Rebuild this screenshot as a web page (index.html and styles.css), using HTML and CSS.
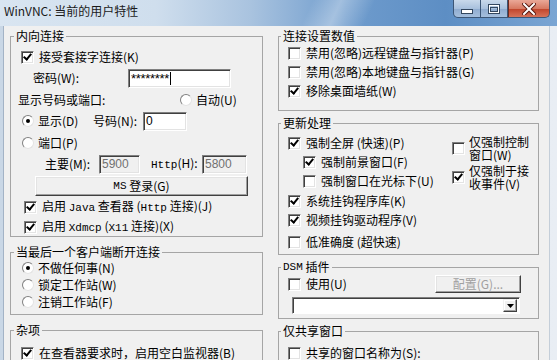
FILE: index.html
```html
<!DOCTYPE html>
<html lang="zh-CN">
<head>
  <meta charset="UTF-8" />
  <title>WinVNC: 当前的用户特性</title>
  <link rel="stylesheet" href="styles.css">
</head>
<body>

<div class="window">
  <div class="titlebar">
    <span class="title">WinVNC: 当前的用户特性</span>
    <div class="caption">
      <span class="cbtn min">
        <svg width="12" height="6" viewBox="0 0 12 6"><rect x="0.5" y="1.5" width="11" height="4" fill="#fff" stroke="#33475f"/></svg>
      </span>
      <span class="cbtn max">
        <svg width="12" height="10" viewBox="0 0 12 10"><rect x="0.5" y="0.5" width="11" height="9" fill="none" stroke="#33475f"/><rect x="1.5" y="1.5" width="9" height="7" fill="none" stroke="#fff" stroke-width="1"/><rect x="2.5" y="3.5" width="7" height="4" fill="none" stroke="#33475f"/></svg>
      </span>
      <span class="cbtn close">
        <svg width="14" height="12" viewBox="0 0 14 12"><path d="M2 1l10 10M12 1L2 11" stroke="#5a1a10" stroke-width="4" stroke-linecap="square"/><path d="M2 1l10 10M12 1L2 11" stroke="#fff" stroke-width="2" stroke-linecap="square"/></svg>
      </span>
    </div>
  </div>

  <div class="client">
    <!-- left column -->
    <div class="col left">
      <fieldset class="group g-in">
        <legend>内向连接</legend>
        <div class="body">
          <div class="row"><span class="chk on"></span><span class="txt">接受套接字连接(K)</span></div>
          <div class="row h20">
            <span class="lbl pwd-lbl">密码(W):</span>
            <span class="edit pwd">********<i class="caret"></i></span>
          </div>
          <div class="row h19">
            <span class="lbl port-lbl">显示号码或端口:</span>
            <span class="rad"></span><span class="txt">自动(U)</span>
          </div>
          <div class="row h20">
            <span class="rad on ind1"></span><span class="txt show-txt">显示(D)</span>
            <span class="lbl num-lbl">号码(N):</span>
            <span class="edit num">0</span>
          </div>
          <div class="row h19"><span class="rad ind1"></span><span class="txt">端口(P)</span></div>
          <div class="row h20">
            <span class="lbl main-lbl">主要(M):</span>
            <span class="edit off e-main">5900</span>
            <span class="lbl http-lbl"><span class="mono">Http</span>(H):</span>
            <span class="edit off e-http">5800</span>
          </div>
          <div class="row h20"><span class="btn ms-btn"><span class="mono">MS</span>&nbsp;登录(G)</span></div>
          <div class="row ind3"><span class="chk on"></span><span class="txt">启用 <span class="mono">Java</span> 查看器 (<span class="mono">Http</span> 连接)(J)</span></div>
          <div class="row ind3"><span class="chk on"></span><span class="txt">启用 <span class="mono">Xdmcp</span> (<span class="mono">X11</span> 连接)(X)</span></div>
        </div>
      </fieldset>

      <fieldset class="group g-last">
        <legend>当最后一个客户端断开连接</legend>
        <div class="body">
          <div class="row h17"><span class="rad on ind1"></span><span class="txt">不做任何事(N)</span></div>
          <div class="row h17"><span class="rad ind1"></span><span class="txt">锁定工作站(W)</span></div>
          <div class="row h17"><span class="rad ind1"></span><span class="txt">注销工作站(F)</span></div>
        </div>
      </fieldset>

      <fieldset class="group g-misc">
        <legend>杂项</legend>
        <div class="body">
          <div class="row"><span class="chk on"></span><span class="txt">在查看器要求时，启用空白监视器(B)</span></div>
        </div>
      </fieldset>
    </div>

    <!-- right column -->
    <div class="col right">
      <fieldset class="group g-conn">
        <legend>连接设置数值</legend>
        <div class="body">
          <div class="row"><span class="chk"></span><span class="txt">禁用(忽略)远程键盘与指针器(P)</span></div>
          <div class="row"><span class="chk"></span><span class="txt">禁用(忽略)本地键盘与指针器(G)</span></div>
          <div class="row"><span class="chk on"></span><span class="txt">移除桌面墙纸(W)</span></div>
        </div>
      </fieldset>

      <fieldset class="group g-upd">
        <legend>更新处理</legend>
        <div class="body">
          <div class="split">
            <div class="sub-left">
              <div class="row"><span class="chk on"></span><span class="txt">强制全屏 (快速)(P)</span></div>
              <div class="row ind15"><span class="chk on"></span><span class="txt">强制前景窗口(F)</span></div>
              <div class="row ind15"><span class="chk"></span><span class="txt">强制窗口在光标下(U)</span></div>
            </div>
            <div class="sub-right">
              <div class="two-line"><span class="chk"></span><span class="txt">仅强制控制<br>窗口(W)</span></div>
              <div class="two-line"><span class="chk on"></span><span class="txt">仅强制于接<br>收事件(V)</span></div>
            </div>
          </div>
          <div class="row hook"><span class="chk on"></span><span class="txt">系统挂钩程序库(K)</span></div>
          <div class="row video"><span class="chk on"></span><span class="txt">视频挂钩驱动程序(V)</span></div>
          <div class="row low"><span class="chk"></span><span class="txt">低准确度 (超快速)</span></div>
        </div>
      </fieldset>

      <fieldset class="group g-dsm">
        <legend><span class="mono">DSM</span> 插件</legend>
        <div class="body">
          <div class="row">
            <span class="chk"></span><span class="txt">使用(U)</span>
            <span class="btn off cfg-btn">配置(G)...</span>
          </div>
          <div class="combo"><span class="drop"><svg width="7" height="4" viewBox="0 0 7 4"><path d="M0 0h7L3.5 4z" fill="#000"/></svg></span></div>
        </div>
      </fieldset>

      <fieldset class="group g-share">
        <legend>仅共享窗口</legend>
        <div class="body">
          <div class="row"><span class="chk"></span><span class="txt">共享的窗口名称为(S):</span></div>
        </div>
      </fieldset>
    </div>
  </div>
</div>

</body>
</html>
```

FILE: styles.css
```css
* {
  box-sizing: border-box;
}
body {
  margin: 0;
  font-family: "Noto Sans CJK SC", "Liberation Sans", sans-serif;
  font-size: 12px;
  color: #000;
  background: #fff;
}
.mono {
  font-family: "Liberation Mono", "Noto Sans CJK SC", monospace;
  font-size: 11px;
}

/* window frame */
.window {
  width: 557px;
  height: 360px;
  overflow: hidden;
  display: flex;
  flex-direction: column;
  background: linear-gradient(90deg, #c9d7e6, #dfe7f0 50%, #e9eef4);
}
.titlebar {
  height: 26px;
  flex: none;
  display: flex;
  justify-content: space-between;
  align-items: flex-start;
  background:
    linear-gradient(115deg, transparent 55%, rgba(255,255,255,.35) 60%, transparent 66%),
    linear-gradient(90deg, #d9e5f1 0%, #cfdeed 28%, #a9c3df 45%, #6f9ccd 62%, #5d8ec4 80%, #7aa5d3 100%);
}
.title {
  padding: 3px 0 0 4px;
  line-height: 16px;
  color: #1a1a1a;
}
.caption {
  display: flex;
  margin-right: 7px;
}
.cbtn {
  height: 18px;
  display: flex;
  align-items: center;
  justify-content: center;
  border: 1px solid #3c5676;
  border-top: none;
}
.cbtn.min {
  width: 28px;
  border-radius: 0 0 0 5px;
  background: linear-gradient(#c9d9eb, #a9c1dd 50%, #8fabcf 51%, #a5bfdd);
  padding-top: 4px;
}
.cbtn.max {
  width: 27px;
  border-left: none;
  background: linear-gradient(#c9d9eb, #a9c1dd 50%, #8fabcf 51%, #a5bfdd);
}
.cbtn.close {
  width: 42px;
  border-left-color: #6b2a20;
  border-radius: 0 0 5px 0;
  background: linear-gradient(#eaa898, #d77a63 50%, #c0432a 51%, #d6735a);
}

/* client area */
.client {
  flex: 1;
  display: grid;
  grid-template-columns: 253px 261px;
  column-gap: 15px;
  align-items: start;
  margin: 0 7px 0 3px;
  padding: 3px 10px 0 6px;
  background: #f0f0f0;
  border-left: 1px solid #a3b3c6;
  border-right: 1px solid #c4ced9;
}
.col {
  display: flex;
  flex-direction: column;
}
.col.left {
  gap: 8px;
}
.col.right {
  gap: 5px;
}

/* group boxes */
.group {
  margin: 0;
  min-width: 0;
  padding: 0 10px;
  border: 1px solid #a5a5a5;
}
.col.right .group {
  padding: 0 9px;
}
.group legend {
  height: 14px;
  padding: 0 2px;
  margin-left: -7px;
  line-height: 14px;
  white-space: nowrap;
}
.group legend .mono {
  vertical-align: top;
}
.body {
  display: flex;
  flex-direction: column;
}
.g-in .body {
  padding-top: 5px;
  gap: 2px;
}
.g-last .body {
  padding-bottom: 4px;
}
.g-misc .body {
  padding-top: 7px;
}
.g-conn .body {
  padding: 1px 0 10px;
  gap: 1px;
}
.g-upd .body {
  padding: 4px 0 3px;
}
.g-dsm .body {
  padding: 1px 8px 4px 0;
  gap: 4px;
}
.g-share .body {
  padding-top: 6px;
}

/* rows */
.row {
  display: flex;
  align-items: center;
  height: 18px;
  white-space: nowrap;
}
.row.h17 { height: 17px; }
.row.h19 { height: 19px; }
.row.h20 { height: 20px; }
.row.ind3 { padding-left: 3px; }
.row.ind15 { padding-left: 15px; }
.txt {
  margin-left: 5px;
  line-height: 14px;
}
.lbl {
  flex: none;
  line-height: 14px;
}
.pwd-lbl { margin-left: 12px; width: 95px; }
.port-lbl { margin-left: -3px; width: 162px; }
.show-txt { width: 55px; }
.num-lbl { width: 50px; }
.main-lbl { margin-left: 24px; width: 54px; }
.http-lbl { margin-left: 11px; width: 51px; }

/* check boxes and radio buttons */
.chk {
  flex: none;
  width: 13px;
  height: 13px;
  display: grid;
  place-items: center;
  background: #fff;
  border: 1px solid;
  border-color: #808080 #fff #fff #808080;
  box-shadow: inset 1px 1px 0 #404040, inset -1px -1px 0 #e3e3e3;
}
.chk.on::after {
  content: "";
  width: 3px;
  height: 6px;
  margin-top: -2px;
  border: solid #000;
  border-width: 0 2px 2px 0;
  transform: rotate(40deg);
}
.rad {
  flex: none;
  width: 12px;
  height: 12px;
  display: grid;
  place-items: center;
  border-radius: 50%;
  background: #fff;
  border: 1px solid;
  border-color: #808080 #e3e3e3 #e3e3e3 #808080;
}
.rad.ind1 {
  margin-left: 1px;
}
.rad.on::after {
  content: "";
  width: 4px;
  height: 4px;
  border-radius: 50%;
  background: #000;
}
.rad + .txt {
  margin-left: 4px;
}

/* edits, buttons, combo */
.edit {
  flex: none;
  height: 19px;
  padding: 0 2px;
  background: #fff;
  border: 1px solid;
  border-color: #808080 #fff #fff #808080;
  box-shadow: inset 1px 1px 0 #404040, inset -1px -1px 0 #e3e3e3;
  font-family: "Liberation Sans", sans-serif;
  font-size: 12px;
  line-height: 17px;
  display: flex;
  align-items: center;
}
.edit.off {
  background: #f0f0f0;
  color: #707070;
}
.pwd {
  width: 103px;
  font-size: 13px;
  letter-spacing: -0.3px;
}
.num { width: 44px; }
.e-main { width: 41px; }
.e-http { width: 45px; }
.caret {
  width: 1px;
  height: 13px;
  margin-left: 1px;
  background: #000;
}
.btn {
  flex: none;
  height: 20px;
  display: flex;
  align-items: center;
  justify-content: center;
  background: #f0f0f0;
  border: 1px solid;
  border-color: #fff #404040 #404040 #fff;
  box-shadow: inset -1px -1px 0 #a0a0a0, inset 1px 1px 0 #e3e3e3;
  line-height: 14px;
}
.btn.off {
  color: #a0a0a0;
}
.ms-btn {
  margin-left: 14px;
  width: 213px;
}
.cfg-btn {
  margin-left: auto;
  width: 86px;
  height: 18px;
}
.combo {
  height: 17px;
  margin: 0 1px 0 4px;
  display: flex;
  justify-content: flex-end;
  align-items: center;
  padding-right: 2px;
  background: #fff;
  border: 1px solid;
  border-color: #808080 #fff #fff #808080;
  box-shadow: inset 1px 1px 0 #404040;
}
.drop {
  width: 14px;
  height: 13px;
  display: flex;
  align-items: center;
  justify-content: center;
  background: #f0f0f0;
  border: 1px solid;
  border-color: #f0f0f0 #404040 #404040 #f0f0f0;
  box-shadow: inset -1px -1px 0 #a0a0a0, inset 1px 1px 0 #fff;
}

/* update group: two sub columns */
.split {
  display: flex;
  height: 56px;
}
.sub-left {
  width: 164px;
  display: flex;
  flex-direction: column;
  gap: 1px;
}
.sub-right {
  padding-top: 1px;
  display: flex;
  flex-direction: column;
  gap: 3px;
}
.two-line {
  display: flex;
  align-items: center;
}
.two-line .txt {
  line-height: 13px;
  margin-left: 4px;
}
.row.hook { margin-top: 2px; }
.row.video { margin-top: 1px; }
.row.low { margin-top: 4px; }
```
